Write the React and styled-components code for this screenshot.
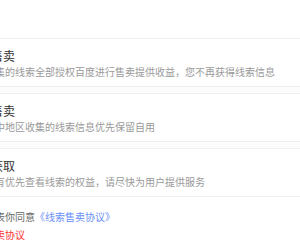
import React from 'react';
import styled, { createGlobalStyle } from 'styled-components';

const GlobalStyle = createGlobalStyle`
  html, body {
    margin: 0;
    padding: 0;
    background: #fff;
    overflow: hidden;
  }
  body {
    font-family: "Noto Sans CJK SC", "Noto Sans", sans-serif;
  }
`;

const options = [
  {
    title: '全部售卖',
    desc: '将您收集的线索全部授权百度进行售卖提供收益，您不再获得线索信息',
  },
  {
    title: '部分售卖',
    desc: '将所选中地区收集的线索信息优先保留自用',
  },
  {
    title: '优先获取',
    desc: '您将享有优先查看线索的权益，请尽快为用户提供服务',
  },
];

const App = () => {
  return (
    <>
      <GlobalStyle />
      <Page>
        <Header />
        <List>
          {options.map(({ title, desc }) => (
            <Card key={title}>
              <Title>{title}</Title>
              <Desc>{desc}</Desc>
            </Card>
          ))}
        </List>
        <Footer>
          <Agree>
            开启代表你同意<Link>《线索售卖协议》</Link>
          </Agree>
          <Warn>查看售卖协议</Warn>
        </Footer>
      </Page>
    </>
  );
};

const Page = styled.div`
  width: 335px;
  margin-left: -35px;
  height: 250px;
  background: #fff;
`;

const Header = styled.div`
  height: 38px;
  background: #fff;
`;

const List = styled.div`
  display: flex;
  flex-direction: column;
  gap: 6px;
  background: #fcfcfc;
`;

const Card = styled.div`
  background: #fff;
  border-top: 1px solid #efefef;
  border-bottom: 1px solid #efefef;
  padding: 10px 0 7px;
`;

const Title = styled.div`
  padding-left: 2px;
  font-size: 12px;
  line-height: 14px;
  color: #333;
  white-space: nowrap;
`;

const Desc = styled.div`
  margin-top: 2px;
  font-size: 10px;
  line-height: 14px;
  color: #999;
  white-space: nowrap;
`;

const Footer = styled.div`
  padding-top: 12px;
  display: flex;
  flex-direction: column;
  gap: 2px;
`;

const Agree = styled.div`
  font-size: 10px;
  line-height: 16px;
  color: #666;
  white-space: nowrap;
`;

const Link = styled.span`
  color: #6a8ff7;
`;

const Warn = styled.div`
  font-size: 10px;
  line-height: 16px;
  color: #f33;
  white-space: nowrap;
`;

export default App;
